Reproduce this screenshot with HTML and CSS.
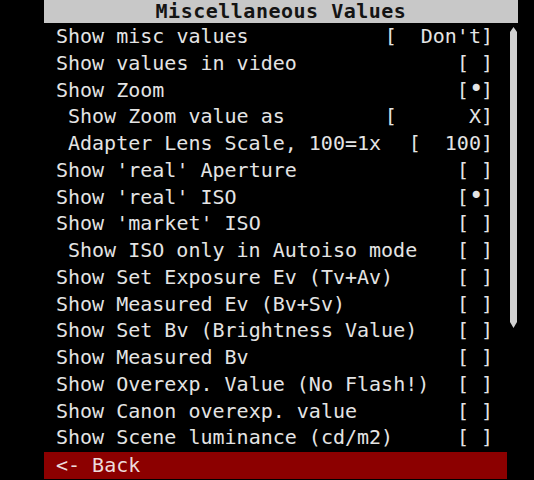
FILE: index.html
```html
<!DOCTYPE html>
<html lang="en">
<head>
    <meta charset="UTF-8">
    <meta name="viewport" content="width=device-width, initial-scale=1.0">
    <title>Miscellaneous Values</title>
    <link rel="stylesheet" href="styles.css">
</head>
<body>

<div class="menu">
    <!-- Menu title -->
    <div class="menu-title">Miscellaneous Values</div>

    <div class="menu-body">
        <div class="menu-list">
            <div class="item"><span>Show misc values</span><span class="val">[  Don't]</span></div>
            <div class="item"><span>Show values in video</span><span class="val">[ ]</span></div>
            <div class="item"><span>Show Zoom</span><span class="val">[<span class="dot">•</span>]</span></div>
            <div class="item sub"><span>Show Zoom value as</span><span class="val">[      X]</span></div>
            <div class="item sub"><span>Adapter Lens Scale, 100=1x</span><span class="val">[  100]</span></div>
            <div class="item"><span>Show 'real' Aperture</span><span class="val">[ ]</span></div>
            <div class="item"><span>Show 'real' ISO</span><span class="val">[<span class="dot">•</span>]</span></div>
            <div class="item"><span>Show 'market' ISO</span><span class="val">[ ]</span></div>
            <div class="item sub"><span>Show ISO only in Autoiso mode</span><span class="val">[ ]</span></div>
            <div class="item"><span>Show Set Exposure Ev (Tv+Av)</span><span class="val">[ ]</span></div>
            <div class="item"><span>Show Measured Ev (Bv+Sv)</span><span class="val">[ ]</span></div>
            <div class="item"><span>Show Set Bv (Brightness Value)</span><span class="val">[ ]</span></div>
            <div class="item"><span>Show Measured Bv</span><span class="val">[ ]</span></div>
            <div class="item"><span>Show Overexp. Value (No Flash!)</span><span class="val">[ ]</span></div>
            <div class="item"><span>Show Canon overexp. value</span><span class="val">[ ]</span></div>
            <div class="item"><span>Show Scene luminance (cd/m2)</span><span class="val">[ ]</span></div>
            <div class="item back"><span>&lt;- Back</span></div>
        </div>

        <!-- Scrollbar -->
        <div class="scroll">
            <svg class="thumb" width="7" height="301" viewBox="0 0 7 301" preserveAspectRatio="none">
                <polygon points="3.5,0 7,5 7,295 3.5,301 0,295 0,5" fill="#d2d2d2"/>
            </svg>
        </div>
    </div>
</div>

</body>
</html>
```

FILE: styles.css
```css
body {
    margin: 0;
    background-color: #000;
    font-family: "DejaVu Sans Mono", "Liberation Mono", monospace;
    font-size: 20px;
    color: #e4e4e4;
}
.menu {
    width: 474px;
    margin-left: 44px;
}
.menu-title {
    height: 23px;
    line-height: 23px;
    background-color: #c8c8c8;
    color: #141414;
    font-weight: bold;
    letter-spacing: 0.5px;
    text-align: center;
}
.menu-body {
    display: flex;
}
.menu-list {
    width: 463px;
}
.item {
    display: flex;
    justify-content: space-between;
    height: 26.75px;
    line-height: 26.75px;
    padding: 0 14px 0 12px;
    white-space: pre;
}
.item.sub {
    padding-left: 24px;
}
.item.back {
    margin-top: 1px;
    background-color: #8c0000;
    color: #ecdcdc;
}
.dot {
    font-size: 24px;
    line-height: 20px;
    letter-spacing: -2.4px;
}
.scroll {
    width: 11px;
    padding-top: 4px;
    padding-left: 3px;
    box-sizing: border-box;
}
.thumb {
    display: block;
}
```
